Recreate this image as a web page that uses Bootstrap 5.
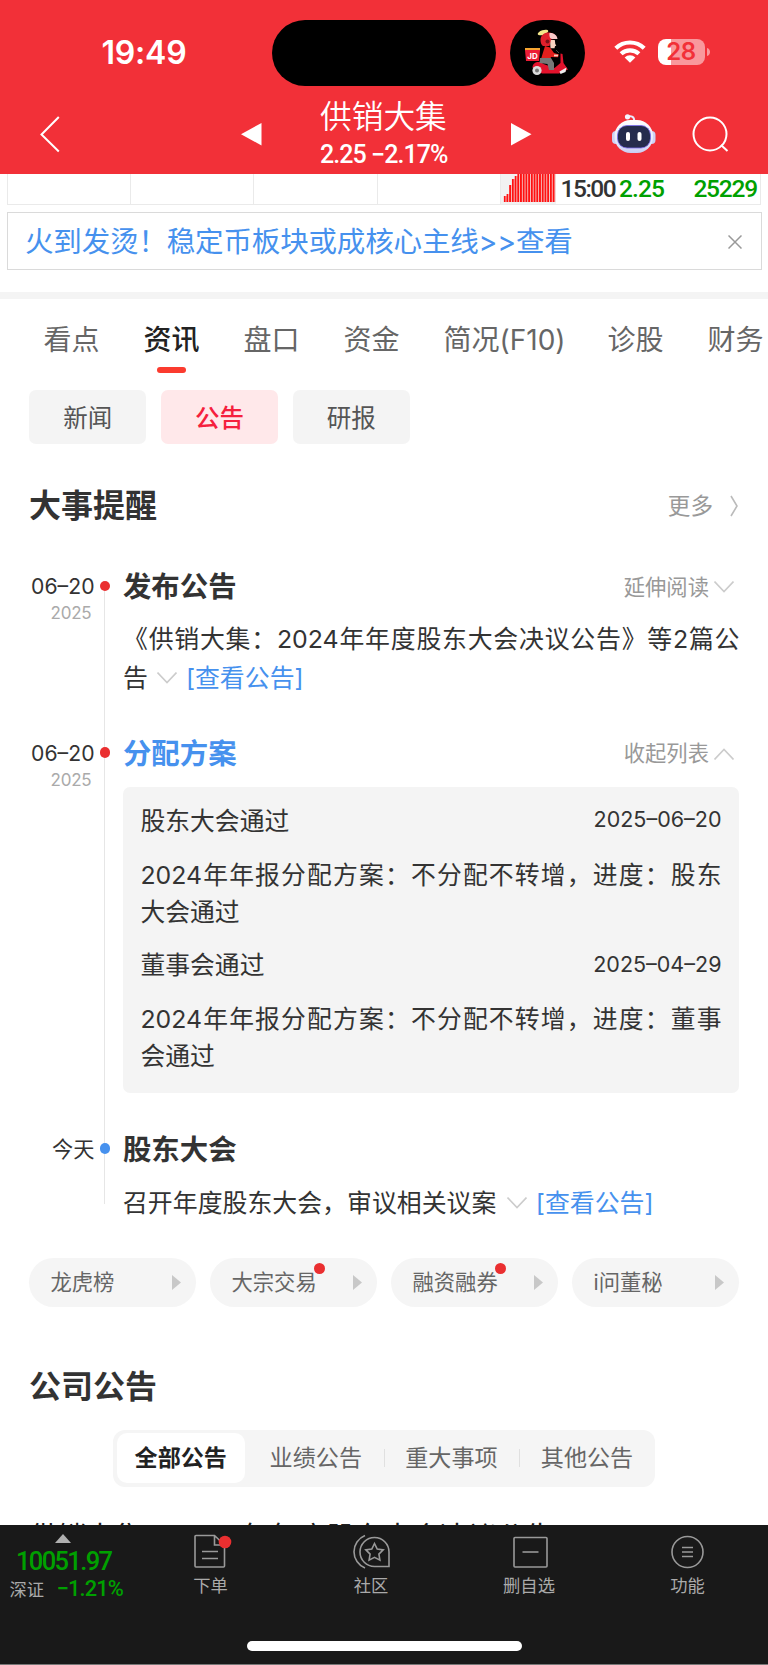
<!DOCTYPE html>
<html lang="zh-CN">
<head>
<meta charset="utf-8">
<meta name="viewport" content="width=device-width, initial-scale=1">
<title>供销大集</title>
<link href="https://cdn.jsdelivr.net/npm/bootstrap@5.3.0/dist/css/bootstrap.min.css" rel="stylesheet">
<style>
body{font-family:Inter,"Noto Sans CJK SC",sans-serif;color:#333;background:#fff;width:768px;height:1665px;overflow:hidden;white-space:nowrap}
svg{display:block;flex:none}
.din{font-family:Roboto,"Noto Sans CJK SC",sans-serif;font-weight:500}
.app-head{background:#f23038;height:174px;color:#fff}
.status{height:87px;padding-top:20px}
.clock{margin-left:101.5px;width:170.5px;font-size:32px;font-weight:600;line-height:65px;letter-spacing:-.2px}
.island{width:224px;height:66px;border-radius:33px;background:#000}
.rider{width:75px;height:66px;border-radius:33px;background:#000;margin-left:14px}
.battery{width:47px;height:26px;border-radius:8px;background:linear-gradient(90deg,#fff 13px,#f9989c 13px);color:#f23038;font-weight:600;font-size:24px;line-height:26px;letter-spacing:-.5px}
.stock{width:127px;line-height:32px;font-size:31.7px;font-weight:350}
.stock .din{font-size:25px;line-height:28px}
.strip{height:31px;margin:0 7px 0 6.5px;border:1px solid #eaeaea;border-top:0}
.strip i{width:123.4px;border-right:1px solid #eaeaea;flex:none}
.strip .din{font-size:24.5px;line-height:29px}
.green{color:#00a000}
.ad{height:58px;margin:7px 6px 0 6.5px;border:1px solid #dadada;color:#4691ee;font-size:28.5px;letter-spacing:-.15px;padding:2px 19px 0 17.5px}
.rule{height:7px;margin-top:22px;background:#f4f4f4}
.tabs{height:79px;padding-left:43.5px;gap:44px;font-size:28px;color:#666;line-height:82px}
.tabs span{flex:none}
.tabs .on{color:#222;font-weight:500;position:relative}
.tabs .on::after{content:"";position:absolute;left:13px;top:67.5px;width:29px;height:6px;border-radius:3px;background:#fb3b2f}
.pills{margin:12px 0 0 29px;gap:14.5px}
.pills span{width:117.3px;height:53.5px;border-radius:7px;background:#f4f4f4;color:#555;font-size:24.5px;line-height:57px;text-align:center}
.pills .on{background:#ffe8ea;color:#f5203d;font-weight:500}
.sec{height:64px;padding:1px 29px 0;font-size:32px;font-weight:700}
.more{font-size:22.6px;font-weight:400;color:#999}
.tl{position:relative;padding-top:28.5px}
.tl::before{content:"";position:absolute;left:104px;top:48px;height:618px;width:1px;background:#e6e6e6}
.when{width:94.5px;font-size:21.2px;line-height:40px;flex:none}
.when small{font-size:17px;line-height:15px;color:#aaa;padding-right:3px;display:block;letter-spacing:-.2px}
.dot{width:10.6px;height:10.6px;border-radius:50%;background:#ea2f30;margin:14.7px 12.7px 0 5.2px;flex:none;position:relative}
.dot.b{background:#4691ee}
.what{width:616.5px;flex:none}
.ttl{height:40px;font-size:28.4px;font-weight:700;padding-top:3px}
.fold{font-size:21.3px;font-weight:400;color:#999;padding-right:5.5px}
.fold svg{margin-top:-1px}
.txt{font-size:24.9px;line-height:39px;position:relative;top:.7px}
.just{text-align-last:justify}
.blue{color:#4691ee}
.plan{height:306px;border-radius:7px;background:#f4f4f4;padding:14.5px 18px 0 17.5px;margin-top:14px;font-size:24.8px;line-height:36.7px}
.plan .hd{height:40px}
.plan time{font-size:21.5px;position:relative;top:-1.5px}
.chips{margin:35.5px 29px 0;gap:14px}
.chips div{flex:1 1 0;height:49.5px;border-radius:25px;background:#f5f5f5;color:#666;font-size:21.3px;padding:2px 15.5px 0 21.5px;position:relative}
.chips svg{margin-top:-1px}
.chips b{position:absolute;left:104.2px;top:5px;width:11px;height:11px;border-radius:50%;background:#ea2f30}
.seg{width:542px;height:57px;margin:12px 0 0 113px;border-radius:12px;background:#f5f5f5;padding:3.5px;font-size:23.1px;color:#666}
.seg span{width:135.6px;text-align:center;line-height:51px;flex:none}
.seg .on{width:128.5px;height:50px;background:#fff;border-radius:10px;color:#222;font-weight:700}
.seg .ln{border-left:1px solid #e0e0e0;height:18px;width:0;margin-right:-1px}
.news{font-size:28.4px;line-height:40px;margin:30.3px 0 0 29px;height:40px;color:#222}
.bar{height:140px;background:#191919;color:#aaa;font-size:17.3px;border-bottom:1px solid #777;position:relative}
.idx{width:131px;flex:none}
.act{width:159px;padding-top:9px;flex:none}
.act div{line-height:24px;margin-top:5px}
.home{position:absolute;left:246.5px;top:116px;width:275px;height:9.6px;border-radius:5px;background:#fff}
</style>
</head>
<body>
<header class="app-head">
  <div class="status d-flex">
    <div class="clock">19:49</div>
    <div class="island"></div>
    <div class="rider">
      <svg width="75" height="66" viewBox="0 0 75 66">
        <ellipse cx="33" cy="12.500" rx="5.500" ry="2.300" fill="#f3e58b" transform="rotate(-18 33 12.500)"/>
        <path d="M15 28h15v3H15z" fill="#f7a531"/><path d="M15 30h15l-1 11H16z" fill="#ec1c35"/>
        <text x="22.500" y="38.500" font-size="8" font-weight="700" fill="#fff" text-anchor="middle">JD</text>
        <path d="M40 20l4.800 0 .5 4 1 1.500-1.300.7-.5 2-4 0z" fill="#f8d3c0"/>
        <path d="M35 26l5 1.500 4 5.500 5 1.500-1 2.700-7-.2-1 3-9-1z" fill="#e41f1d"/>
        <path d="M30.500 20c0-5 4-7.500 8-7.500s7.500 2 8.500 6l-6 1-1.500 6.500-6.500 0c-1.500-1-2.500-3-2.500-6z" fill="#e11f2c"/>
        <path d="M39.500 13c4-.5 7.500 2 8 6l-5.500 0c-2 0-3-3-2.500-6z" fill="#f8c9c9"/>
        <circle cx="37.500" cy="21.500" r="2" fill="#7a1018"/>
        <path d="M50.500 33.500l2 .5 1 9 4.500 6.500-9 4H32l-9.500-6c0-4 3-6 8-5.500l3 2 11 4 6-5z" fill="#e3122c"/>
        <path d="M30 38h11l3 5v7h-5l-1.500-6-8-1z" fill="#777"/>
        <circle cx="27" cy="50.500" r="4.600" fill="#ddd"/><circle cx="27" cy="50.500" r="2" fill="#777"/>
        <path d="M49.500 51.500l7-4-1 4.500-5 2z" fill="#eee"/>
        <path d="M44 35.500h4" stroke="#f8d3c0" stroke-width="1.800"/><path d="M46 30l3 3" stroke="#444" stroke-width="1"/>
      </svg>
    </div>
    <svg width="32" height="24" viewBox="0 0 32 24" style="margin:19px 0 0 29px" fill="none" stroke="#fff" stroke-width="4.200">
      <path d="M1.800 9.200a20.500 20.500 0 0 1 28.400 0"/><path d="M7.100 14.800a13 13 0 0 1 17.800 0"/><path d="M16 23.800l-5.400-5.300a7.800 7.800 0 0 1 10.800 0z" fill="#fff" stroke="none"/>
    </svg>
    <div class="battery text-center" style="margin:19px 0 0 11.500px">28</div>
    <svg width="4" height="8" viewBox="0 0 4 8" style="margin:28px 0 0 2px"><path d="M0 0c4 1 4 7 0 8z" fill="#f9989c"/></svg>
  </div>
  <div class="d-flex">
    <svg width="20" height="37" viewBox="0 0 20 37" style="margin:29px 0 0 39.500px" fill="none" stroke="#fff" stroke-width="2"><path d="M18.800 1L1.500 18.500 18.800 35.500"/></svg>
    <svg width="21" height="23" viewBox="0 0 21 23" style="margin:35.500px 0 0 181px"><path d="M20.500 0v22.500L0 11.200z" fill="#fff"/></svg>
    <div class="stock" style="margin:13.500px 0 0 58.500px"><div>供销大集</div><div class="din" style="margin-top:8px;letter-spacing:-.950px">2.25 −2.17%</div></div>
    <svg width="21" height="23" viewBox="0 0 21 23" style="margin:35.500px 0 0 63.500px"><path d="M0 0v22.500L20.500 11.200z" fill="#fff"/></svg>
    <svg width="44" height="40" viewBox="0 0 44 40" style="margin:27px 0 0 80.500px">
      <defs><linearGradient id="shell" x1="0" y1="0" x2="0" y2="1"><stop offset="0" stop-color="#fff"/><stop offset=".7" stop-color="#e3e6fa"/><stop offset="1" stop-color="#c9cdf2"/></linearGradient></defs>
      <path d="M16.500 2.500c5-1 6 2 5.500 5" fill="none" stroke="#e8eafc" stroke-width="2"/><circle cx="15.500" cy="2.800" r="2.600" fill="#f4f4ff"/>
      <rect x="0" y="17" width="8" height="13" rx="4" fill="#cdd2f5"/><rect x="35.500" y="17" width="8" height="13" rx="4" fill="#cdd2f5"/>
      <rect x="2.500" y="6" width="38.500" height="33" rx="16" fill="url(#shell)"/>
      <rect x="5.500" y="11.500" width="33" height="22.500" rx="9.500" fill="#252c4d" stroke="#7b6cf0" stroke-width=".8"/>
      <rect x="14" y="18" width="4" height="9" rx="2" fill="#fff"/><rect x="25.500" y="18" width="4" height="9" rx="2" fill="#fff"/>
    </svg>
    <svg width="37" height="37" viewBox="0 0 37 37" style="margin:29px 0 0 35.500px" fill="none" stroke="#fff" stroke-width="2"><circle cx="18" cy="18" r="16.500"/><path d="M29 29l6.500 6"/></svg>
  </div>
</header>
<main class="overflow-hidden" style="height:1351px">
  <div class="strip d-flex">
    <i></i><i></i><i></i><i></i>
    <svg width="55" height="30" viewBox="0 0 55 30"><defs><pattern id="st" width="2.72" height="30" patternUnits="userSpaceOnUse"><rect width="2" height="30" fill="#f11"/></pattern></defs><path d="M0 0h55v30H0z" fill="#f2f2f2"/><path d="M2.700 28v-6h2.700v-2h2.700v-9h2.700V5h2.700V2h2.700V0h38v28z" fill="url(#st)"/></svg>
    <span class="din" style="margin-left:4.500px;width:58.500px;letter-spacing:-1.500px">15:00</span>
    <span class="din green" style="letter-spacing:-.900px">2.25</span>
    <span class="din green ms-auto" style="letter-spacing:-1.200px;margin-right:3px">25229</span>
  </div>
  <div class="ad d-flex align-items-center justify-content-between"><span>火到发烫！稳定币板块或成核心主线&gt;&gt;查看</span>
    <svg width="14" height="14" viewBox="0 0 14 14" stroke="#999" stroke-width="1.500"><path d="M.5.5l13 13M13.500.5l-13 13"/></svg></div>
  <div class="rule"></div>
  <nav class="tabs d-flex overflow-hidden"><span>看点</span><span class="on">资讯</span><span>盘口</span><span>资金</span><span style="width:120px">简况(F10)</span><span>诊股</span><span>财务</span></nav>
  <div class="pills d-flex"><span>新闻</span><span class="on">公告</span><span>研报</span></div>
  <div class="sec d-flex align-items-center justify-content-between" style="margin-top:30px"><span>大事提醒</span><span class="more d-flex align-items-center">更多<svg width="9" height="22" viewBox="0 0 9 22" style="margin-left:17px" fill="none" stroke="#bbb" stroke-width="1.600"><path d="M1 1l6 10-6 10"/></svg></span></div>

  <section class="tl">
    <div class="d-flex">
      <div class="when text-end">06–20<small>2025</small></div><div class="dot"></div>
      <div class="what">
        <div class="ttl d-flex align-items-center justify-content-between"><span>发布公告</span><span class="fold d-flex align-items-center">延伸阅读<svg width="20" height="12" viewBox="0 0 20 12" style="margin-left:5px" fill="none" stroke="#ccc" stroke-width="1.600"><path d="M.5.5L10 10.500 19.500.5"/></svg></span></div>
        <div class="txt" style="margin-top:13px"><div class="just">《供销大集：2024年年度股东大会决议公告》等2篇公</div>
          <div class="d-flex align-items-center"><span>告</span><svg width="20" height="12" viewBox="0 0 20 12" style="margin:0 8.500px 0 9.500px" fill="none" stroke="#ccc" stroke-width="1.600"><path d="M.5.5L10 10.500 19.500.5"/></svg><span class="blue">[查看公告]</span></div></div>
      </div>
    </div>
    <div class="d-flex" style="margin-top:35.500px">
      <div class="when text-end">06–20<small>2025</small></div><div class="dot"></div>
      <div class="what">
        <div class="ttl d-flex align-items-center justify-content-between"><span class="blue">分配方案</span><span class="fold d-flex align-items-center">收起列表<svg width="20" height="12" viewBox="0 0 20 12" style="margin-left:5px" fill="none" stroke="#ccc" stroke-width="1.600"><path d="M.5 11.500L10 1.500l9.500 10"/></svg></span></div>
        <div class="plan">
          <div class="hd d-flex align-items-center justify-content-between"><span>股东大会通过</span><time>2025–06–20</time></div>
          <div style="margin-top:15.600px"><div class="just">2024年年报分配方案：不分配不转增，进度：股东</div><div style="margin-top:.5px">大会通过</div></div>
          <div class="hd d-flex align-items-center justify-content-between" style="margin-top:15.300px"><span>董事会通过</span><time>2025–04–29</time></div>
          <div style="margin-top:15px"><div class="just">2024年年报分配方案：不分配不转增，进度：董事</div><div style="margin-top:.7px">会通过</div></div>
        </div>
      </div>
    </div>
    <div class="d-flex" style="margin-top:36px">
      <div class="when text-end">今天</div><div class="dot b"></div>
      <div class="what">
        <div class="ttl d-flex align-items-center">股东大会</div>
        <div class="txt d-flex align-items-center" style="margin-top:14.500px"><span>召开年度股东大会，审议相关议案</span><svg width="20" height="12" viewBox="0 0 20 12" style="margin:0 8.500px 0 11px" fill="none" stroke="#ccc" stroke-width="1.600"><path d="M.5.5L10 10.500 19.500.5"/></svg><span class="blue">[查看公告]</span></div>
      </div>
    </div>
  </section>

  <div class="chips d-flex">
    <div class="d-flex align-items-center justify-content-between">龙虎榜<svg width="9" height="15" viewBox="0 0 9 15"><path d="M0 0l9 7.500L0 15z" fill="#c8c8c8"/></svg></div>
    <div class="d-flex align-items-center justify-content-between">大宗交易<b></b><svg width="9" height="15" viewBox="0 0 9 15"><path d="M0 0l9 7.500L0 15z" fill="#c8c8c8"/></svg></div>
    <div class="d-flex align-items-center justify-content-between">融资融券<b></b><svg width="9" height="15" viewBox="0 0 9 15"><path d="M0 0l9 7.500L0 15z" fill="#c8c8c8"/></svg></div>
    <div class="d-flex align-items-center justify-content-between">i问董秘<svg width="9" height="15" viewBox="0 0 9 15"><path d="M0 0l9 7.500L0 15z" fill="#c8c8c8"/></svg></div>
  </div>
  <div class="sec d-flex align-items-center" style="margin-top:47px;margin-bottom:-.5px;padding-top:2px">公司公告</div>
  <div class="seg d-flex align-items-center"><span class="on">全部公告</span><span style="margin-left:3px">业绩公告</span><span class="ln"></span><span>重大事项</span><span class="ln"></span><span>其他公告</span></div>
  <div class="news">供销大集：2024年年度股东大会决议公告</div>
</main>
<footer class="bar d-flex">
  <div class="idx">
    <svg width="16" height="9" viewBox="0 0 16 9" style="margin:9px 0 0 55px"><path d="M8 0l8 9H0z" fill="#b0b0b0"/></svg>
    <div class="din green" style="margin:5px 0 0 16px;font-size:25.500px;line-height:27px;letter-spacing:-1.650px">10051.97</div>
    <div class="d-flex" style="margin:1px 0 0 9.500px;line-height:26px"><span style="width:47px;padding-top:.5px">深证</span><span class="din green" style="font-size:21.800px;letter-spacing:-.850px">−1.21%</span></div>
  </div>
  <div class="act d-flex flex-column align-items-center">
    <svg width="42" height="35" viewBox="-2 0 42 35" fill="none" stroke="#999" stroke-width="1.600"><path d="M22.500 1.500H4a1 1 0 0 0-1 1V32a1 1 0 0 0 1 1h27.500a1 1 0 0 0 1-1V11zM22.500 1.500V11h9.500M10 17.500h16M10 24.500h16"/><circle cx="33" cy="8" r="6.300" fill="#ea2f30" stroke="none"/></svg><div>下单</div></div>
  <div class="act d-flex flex-column align-items-center" style="padding-left:3px">
    <svg width="37" height="35" viewBox="0 0 37 35" fill="none" stroke="#999" stroke-width="1.600"><path d="M12 1.500a17.500 17.500 0 0 0 0 32.500M21.500 3.500a14.500 14.500 0 0 0 0 29H36V18A14.500 14.500 0 0 0 21.500 3.500z"/><path d="M21.500 9.500l2.700 5.500 6 .9-4.300 4.200 1 6-5.400-2.800-5.400 2.800 1-6-4.300-4.200 6-.9z"/></svg><div>社区</div></div>
  <div class="act d-flex flex-column align-items-center" style="padding-left:3px">
    <svg width="35" height="35" viewBox="0 0 35 35" fill="none" stroke="#999" stroke-width="1.600"><rect x="1" y="3.500" width="33" height="29.500" rx="1"/><path d="M9.500 18h16"/></svg><div style="margin-left:-2px">删自选</div></div>
  <div class="act d-flex flex-column align-items-center">
    <svg width="35" height="35" viewBox="0 0 35 35" fill="none" stroke="#999" stroke-width="1.600"><circle cx="17.500" cy="18" r="15.500"/><path d="M12 13.500h11M12 18h11M12 22.500h11"/></svg><div>功能</div></div>
  <div class="home"></div>
</footer>
<script src="https://cdn.jsdelivr.net/npm/bootstrap@5.3.0/dist/js/bootstrap.bundle.min.js"></script>
</body>
</html>
